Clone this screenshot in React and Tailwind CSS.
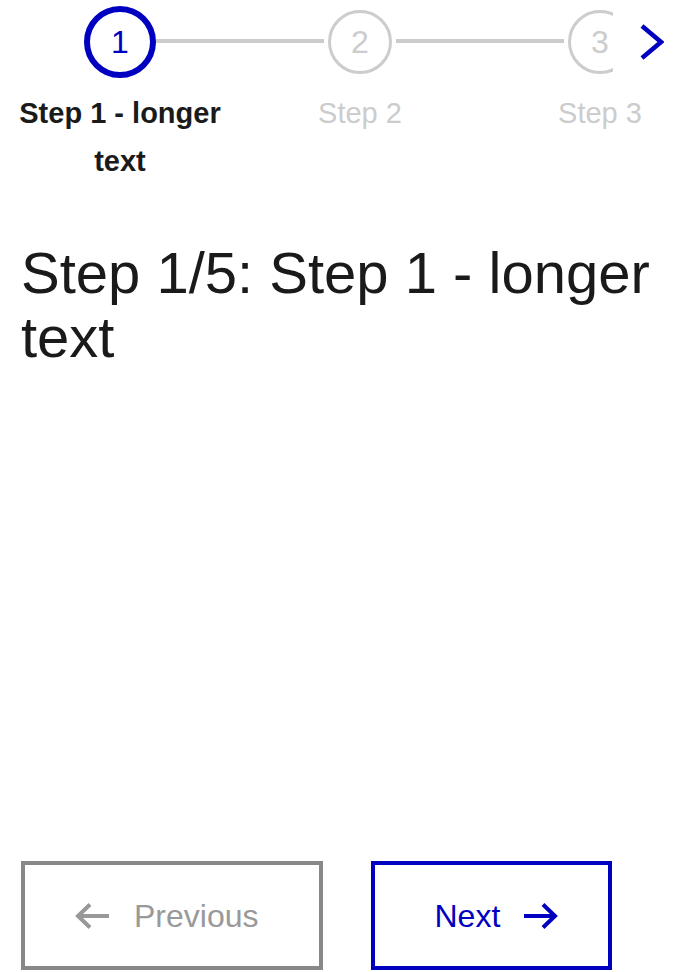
import React from 'react';

const steps = [
    { n: 1, label: 'Step 1 - longer text' },
    { n: 2, label: 'Step 2' },
    { n: 3, label: 'Step 3' },
];

const font = { fontFamily: '"Liberation Sans", Arial, sans-serif' };

const ArrowLeft = ({ className }) => (
    <svg width="34" height="26" viewBox="0 0 34 26" fill="none" stroke="currentColor" strokeWidth="4" className={className}>
        <path d="M34 13H3" />
        <path d="M15 1.5L3 13l12 11.5" />
    </svg>
);

const ArrowRight = ({ className }) => (
    <svg width="34" height="26" viewBox="0 0 34 26" fill="none" stroke="currentColor" strokeWidth="4" className={className}>
        <path d="M0 13h31" />
        <path d="M19 1.5L31 13 19 24.5" />
    </svg>
);

const Step = ({ step, index }) => {
    const active = index === 0;
    return (
        <div className="w-[240px] shrink-0 flex flex-col items-center">
            <div className="w-full h-[84px] flex items-center">
                <div className={`flex-1 h-[4px] mb-[3px] ${index === 0 ? '' : 'bg-[#cccccc]'}`}></div>
                {active ? (
                    <div className="w-[72px] h-[72px] rounded-full border-[6px] border-[#0000c0] flex items-center justify-center text-[32px] text-[#0000c0]">
                        {step.n}
                    </div>
                ) : (
                    <div className="w-[64px] h-[64px] mx-[4px] rounded-full border-[3px] border-[#cccccc] flex items-center justify-center text-[32px] text-[#cccccc]">
                        {step.n}
                    </div>
                )}
                <div className={`flex-1 h-[4px] mb-[3px] ${index === steps.length - 1 ? '' : 'bg-[#cccccc]'}`}></div>
            </div>
            <p className={`mt-[5px] px-[4px] text-center text-[29px] leading-[48px] ${active ? 'font-bold text-[#1a1a1a]' : 'text-[#cccccc]'}`}>
                {step.label}
            </p>
        </div>
    );
};

export default function App() {
    return (
        <div className="h-[972px] bg-white flex flex-col overflow-hidden" style={font}>
            {/* Stepper */}
            <div className="relative overflow-hidden">
                <div className="flex">
                    {steps.map((s, i) => (
                        <Step key={s.n} step={s} index={i} />
                    ))}
                </div>
                <button className="absolute top-0 right-0 w-[73px] h-[84px] bg-white flex items-center justify-center pl-[4px] text-[#0000c0]">
                    <svg width="24" height="36" viewBox="0 0 24 36" fill="none" stroke="currentColor" strokeWidth="4.5">
                        <path d="M2 2l19 16L2 34" />
                    </svg>
                </button>
            </div>

            {/* Title */}
            <h1 className="mt-[56px] px-[21px] text-[58px] leading-[64px] text-[#1a1a1a] font-normal">
                Step 1/5: Step 1 - longer text
            </h1>

            <div className="flex-1"></div>

            {/* Navigation */}
            <div className="flex gap-[48px] px-[21px] pb-[2px]">
                <button className="h-[109px] pl-[50px] pr-[60px] border-[4px] border-[#888888] flex items-center gap-[25px] text-[#999999] text-[32px]">
                    <ArrowLeft />
                    <span>Previous</span>
                </button>
                <button className="h-[109px] pl-[60px] pr-[50px] border-[4px] border-[#0000c0] flex items-center gap-[24px] text-[#0000c0] text-[32px]">
                    <span>Next</span>
                    <ArrowRight />
                </button>
            </div>
        </div>
    );
}
